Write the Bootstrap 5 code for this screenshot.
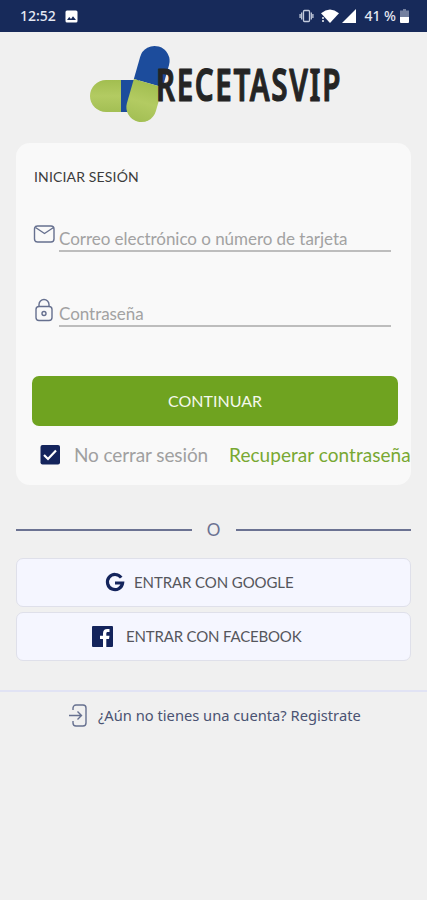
<!DOCTYPE html>
<html lang="es">
<head>
<meta charset="utf-8">
<meta name="viewport" content="width=device-width, initial-scale=1">
<title>RecetasVIP</title>
<link href="https://cdn.jsdelivr.net/npm/bootstrap@5.3.0/dist/css/bootstrap.min.css" rel="stylesheet">
<style>
body{background:#f0f0f0;font-family:Lato,"Noto Sans",sans-serif;line-height:20px}
svg{display:block;flex:none;overflow:visible}
.statusbar{height:32px;background:#172a5a;color:#e4e8f2;font:500 14px/32px "Noto Sans",sans-serif;padding:0 18px 0 20px}
.brand{height:111px;padding-left:80px}
.login{margin:0 16px;height:342px;background:#f9f9f9;border-radius:14px;padding:24px 0 0 16px}
.login-title{font-size:14px;color:#3c3c3c;padding-left:2px;letter-spacing:.15px}
.field{height:46px;margin-right:20px}
.field-email{margin-top:19px}
.field-pass{margin-top:29px}
.field-icon{margin-top:19px}
.field-input{border:0;border-bottom:2px solid #bdbdbd;border-radius:0;background:transparent;padding:0;height:26px;font-size:17px;line-height:23px;letter-spacing:-.04px}
.field-input::placeholder{color:#a2a2a2;opacity:1}
.continue{height:50px;width:366px;margin-top:49px;background:#6fa320;border-radius:7px;color:#f4f8ec;font-size:16px;--bs-btn-hover-bg:#649519}
.options{font-size:19px;line-height:24px;margin-top:17px;padding-left:8px;white-space:nowrap}
.remember{color:#a0a0a0;margin-left:14px;letter-spacing:-.1px}
.recover{color:#78a832;margin-left:21px;letter-spacing:.04px}
.divider{margin-top:35px;height:20px}
.rule{height:2px;background:#6b7292}
.or{font-size:17px;color:#6b7292;width:44px}
.logins{margin-top:18px;row-gap:5px}
.social{height:49px;background:#f5f6ff;border:1px solid #dfe0ea;border-radius:7px;color:#55565c;font-size:15px;letter-spacing:-.1px}
.google{padding-left:88px!important}
.google span{margin-left:9px}
.facebook{padding-left:75px!important}
.facebook span{margin-left:13px;letter-spacing:-.17px}
.signup{border-top:2px solid #e1e3f4;color:#4a5372;font:400 14.700px/20px "Noto Sans",sans-serif;height:50px;margin-top:29px;padding-left:69px}
.signup span{margin-left:9px;padding-bottom:2px}
</style>
</head>
<body>
<header class="statusbar d-flex align-items-center">
  <span>12:52</span>
  <svg class="ms-2 me-auto" width="13" height="13" viewBox="0 0 13 13"><rect x="1.500" y=".5" width="12" height="12" rx="1.5" fill="#fff"/><path d="M3 10l2.200-3 1.800 2 2-2.800L12 10z" fill="#172a5a"/></svg>
  <svg width="14" height="14" viewBox="2.500 0 14 14" fill="none" stroke="#c3cbdd" stroke-width="1.3"><rect x="2" y="1.5" width="6" height="11" rx="1"/><path d="M.2 3.500v7M9.800 3.500v7M-1.400 5v4M11.400 5v4"/></svg>
  <svg class="mx-1" width="38" height="16" viewBox="0 0 38 16" fill="#fff"><path d="M-1 5.200Q8-2 17 5.200L8 15z"/><path d="M34 1v14H20z"/><path d="M1 9v2M1 12v2" stroke="#fff" stroke-width="1.4"/></svg>
  <span>41 %</span>
  <svg class="ms-1" width="9" height="14" viewBox="0 0 9 14"><path d="M3 0h3v1.500h3V9H0V1.500h3z" fill="#74809f"/><path d="M0 8h9v5a1 1 0 0 1-1 1H1a1 1 0 0 1-1-1z" fill="#fff"/></svg>
</header>

<div class="brand">
  <svg width="270" height="100" viewBox="80 32 270 100" role="img" aria-label="RECETASVIP">
    <defs><linearGradient id="lime" x2="0" y2="1"><stop stop-color="#a2be50"/><stop offset=".5" stop-color="#b3cb62"/><stop offset="1" stop-color="#a3bf54"/></linearGradient></defs>
    <path d="M121 80h18v32h-18z" fill="#1c4c9c"/>
    <path d="M121 80h-15a16 16 0 0 0 0 32h15z" fill="url(#lime)"/>
    <g transform="translate(148 84) rotate(16)">
      <path d="M-15-1v-23a15 15 0 0 1 30 0v23z" fill="#1c4c9c"/>
      <path d="M-15-1h30v25a15 15 0 0 1-30 0z" fill="url(#lime)"/>
    </g>
    <text x="156" y="100.500" textLength="186" lengthAdjust="spacingAndGlyphs" letter-spacing="2.500" font-family="Noto Sans, sans-serif" font-weight="600" font-size="45" fill="#242424" stroke="#242424" stroke-width="1.200" stroke-linejoin="round">RECETASVIP</text>
  </svg>
</div>

<main>
  <form class="login">
    <div class="login-title">INICIAR SESIÓN</div>
    <div class="field field-email d-flex">
      <svg class="field-icon" width="27" height="26" viewBox="0 0 27 26" fill="none" stroke="#66708f" stroke-width="1.4"><rect x="2.500" y="1" width="19.500" height="16" rx="3"/><path d="M3.500 2.500l9 6 9-6"/></svg>
      <input class="form-control field-input align-self-end" type="text" placeholder="Correo electrónico o número de tarjeta" aria-label="Correo">
    </div>
    <div class="field field-pass d-flex">
      <svg class="field-icon" width="27" height="26" viewBox="0 1 27 26" fill="none" stroke="#66708f" stroke-width="1.4"><rect x="4" y="7.500" width="16" height="14" rx="3"/><path d="M7 7.500V5.500a5 5 0 0 1 10 0v2"/><circle cx="12" cy="14.500" r="2"/></svg>
      <input class="form-control field-input align-self-end" type="password" placeholder="Contraseña" aria-label="Contraseña">
    </div>
    <button type="button" class="btn continue d-block p-0">CONTINUAR</button>
    <div class="options d-flex align-items-center">
      <svg width="20" height="20" viewBox="0 0 20 20"><rect x=".5" width="19.500" height="19.500" rx="2" fill="#14245c"/><path d="M4 10l4 4 8-8.500" fill="none" stroke="#fff" stroke-width="2.200"/></svg>
      <span class="remember">No cerrar sesión</span>
      <a href="#" class="recover text-decoration-none">Recuperar contraseña</a>
    </div>
  </form>

  <div class="divider d-flex align-items-center px-3">
    <div class="rule flex-fill"></div><div class="or text-center">O</div><div class="rule flex-fill"></div>
  </div>

  <div class="logins d-grid px-3">
    <button type="button" class="btn social p-0 d-flex align-items-center google">
      <svg width="20" height="20" viewBox="0 0 20 20" fill="none" stroke="#14245c" stroke-width="3.200"><path d="M16.200 4.600A7.600 7.600 0 1 0 17.600 10H10"/></svg>
      <span>ENTRAR CON GOOGLE</span>
    </button>
    <button type="button" class="btn social p-0 d-flex align-items-center facebook">
      <svg width="21" height="21" viewBox="0 0 21 21"><path d="M1 0h19a1 1 0 0 1 1 1v19a1 1 0 0 1-1 1H1a1 1 0 0 1-1-1V1a1 1 0 0 1 1-1z" fill="#14245c"/><path d="M11 21v-8H8V9.800h3V7.500c0-3 1.600-4.400 4.200-4.400h2.300v3h-1.600c-1.300 0-1.600.6-1.600 1.600v2.100h3.200l-.5 3.200h-2.700v8z" fill="#fff"/></svg>
      <span>ENTRAR CON FACEBOOK</span>
    </button>
  </div>
</main>

<footer class="signup d-flex align-items-center">
  <svg width="20" height="24" viewBox="0 0 20 24" fill="none" stroke="#66708f" stroke-width="1.4"><path d="M4 6V4a3 3 0 0 1 3-3h7a3 3 0 0 1 3 3v15a3 3 0 0 1-3 3H7a3 3 0 0 1-3-3v-2M0 11.500h12M8.500 7.500l4 4-4 4"/></svg>
  <span>¿Aún no tienes una cuenta? Registrate</span>
</footer>
<script src="https://cdn.jsdelivr.net/npm/bootstrap@5.3.0/dist/js/bootstrap.bundle.min.js"></script>
</body>
</html>
